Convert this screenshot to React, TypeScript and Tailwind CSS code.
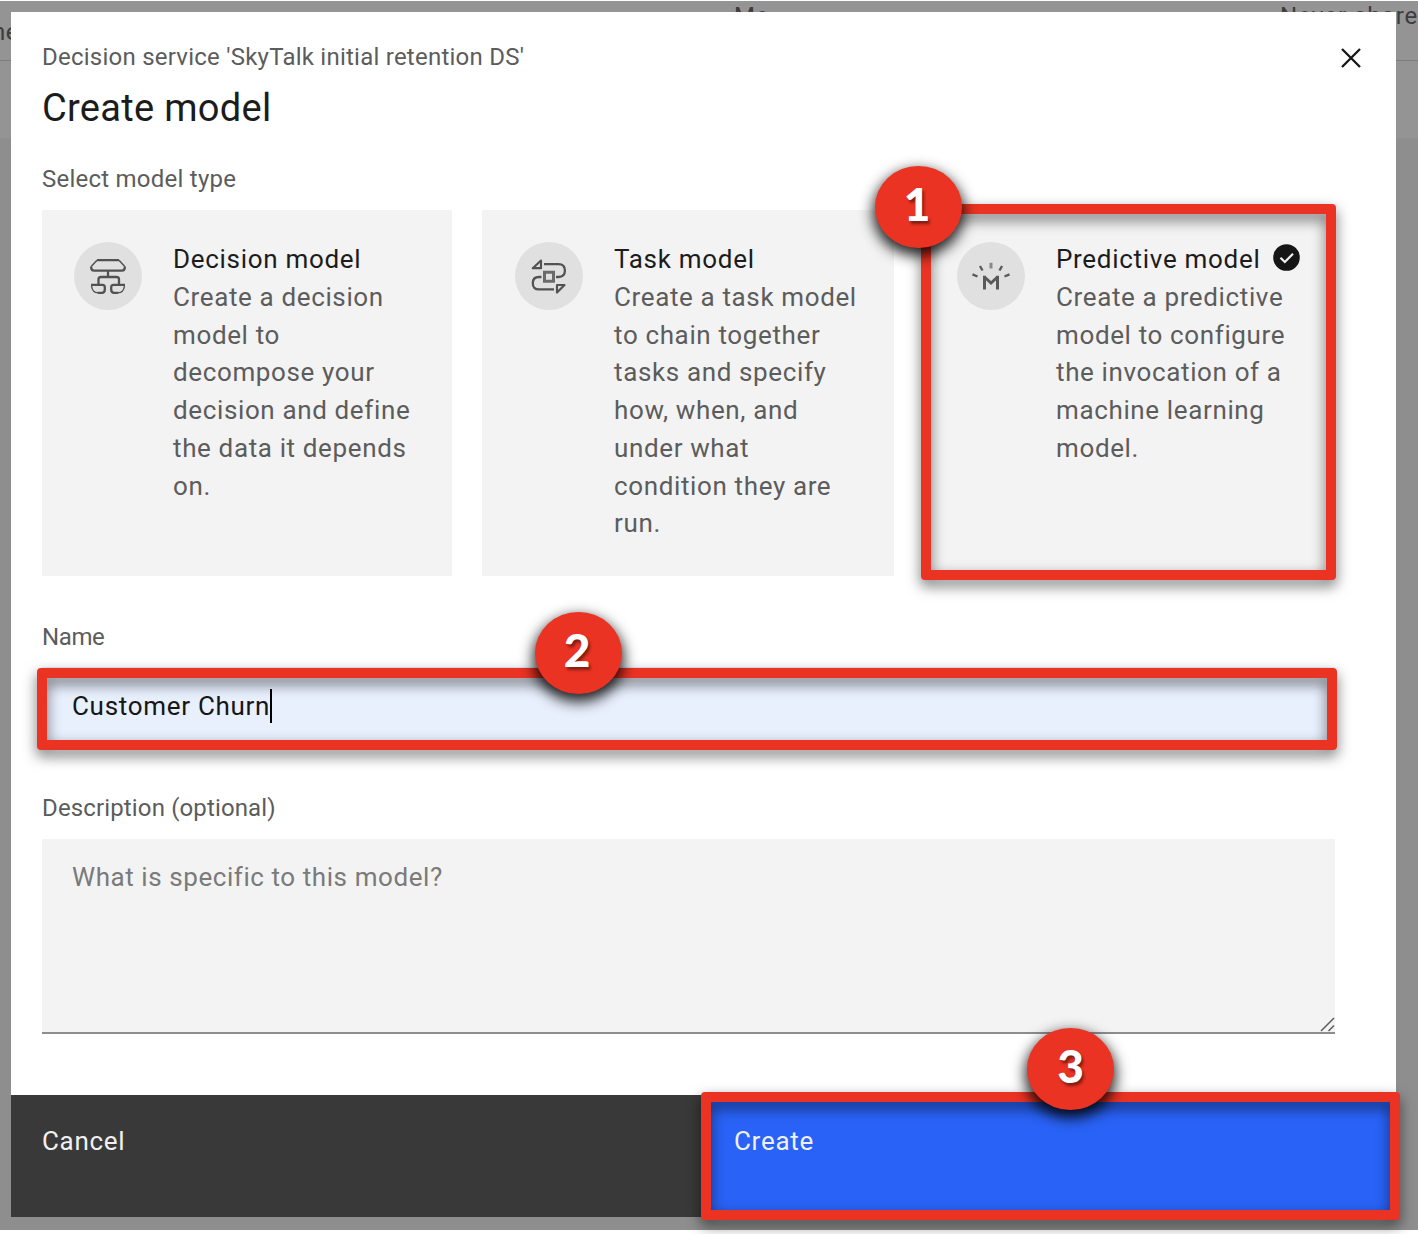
import type { ReactNode } from "react";

function Frame({ className }: { className: string }) {
  return (
    <div
      className={`pointer-events-none absolute rounded-[4px] border-[10px] border-[#eb3323] [filter:drop-shadow(0_6px_7px_rgba(0,0,0,0.55))] ${className}`}
    >
    </div>
  );
}

function Badge({ n, className }: { n: number; className: string }) {
  return (
    <div
      className={`absolute z-10 flex h-[82px] w-[87px] items-center justify-center rounded-[50%] bg-[#eb3323] pb-[7px] font-[Lato,sans-serif] text-[46px] font-black leading-none text-white shadow-[0_6px_14px_2px_rgba(0,0,0,0.85)] [text-shadow:2px_3px_3px_rgba(0,0,0,0.45)] ${className}`}
    >
      {n}
    </div>
  );
}

function DecisionIcon() {
  return (
    <svg width="36" height="36" viewBox="0 0 36 36" fill="none" stroke="#525252" strokeWidth="2.3">
      <path d="M7 2.2H29M1.2 8.4V9.5Q1.2 12.6 4.2 12.6H31.8Q34.8 12.6 34.8 9.5V8.4M18 13V19M8.5 26V21.5Q8.5 19 11 19H26.5Q29 19 29 21.5V26" />
      <path d="M7 2.2L1.2 8.4M29 2.2L34.8 8.4" strokeWidth="1.5" />
      <path d="M1 26.8H12.5Q14.8 26.8 14.8 29.3V31.5Q14.8 34.8 12 34.8H8M35 26.8H23.5Q21.2 26.8 21.2 29.3V31.5Q21.2 34.8 24 34.8H28" />
      <path d="M1.5 28Q2.5 34.8 8 34.8M34.5 28Q33.5 34.8 28 34.8" strokeWidth="1.4" />
    </svg>
  );
}

function TaskIcon() {
  return (
    <svg width="36" height="36" viewBox="0 0 36 36" fill="none" stroke="#525252" strokeWidth="2.3">
      <path d="M13 6.2H27.5Q33.9 6.2 33.9 12.6T27.5 19H25M10.500 19H8Q1.800 19 1.800 25.200T8 31.400H23" />
      <path d="M13.500 14.200H22.500V23.200H13.500Z" strokeWidth="3" stroke="#6a6a6a" />
      <path d="M1.800 10.200H10V2.500Z M26 27H33.500L26 34.500Z" strokeWidth="2.200" strokeLinejoin="round" />
    </svg>
  );
}

function PredictiveIcon() {
  return (
    <svg width="40" height="30" viewBox="0 0 40 30" fill="none" stroke="#5a5a5a" strokeWidth="2.4">
      <path d="M13.500 28.500V14.800M26.500 28.500V14.800" strokeWidth="3" />
      <path d="M13.500 16L20 22L26.500 16" strokeWidth="3" />
      <path d="M20 1.800V7.500" stroke="#888" strokeWidth="3" />
      <path d="M9 5L11.500 9.500M31 5L28.500 9.500M1.500 13.300L6.500 15.500M38.500 13.300L33.500 15.500" />
    </svg>
  );
}

function Card({
  icon,
  title,
  lines,
  selected,
  className,
}: {
  icon: ReactNode;
  title: string;
  lines: string[];
  selected?: boolean;
  className: string;
}) {
  return (
    <div className={`flex h-[366px] shrink-0 bg-[#f3f3f3] pt-8 ${className}`}>
      <div className="flex size-[68px] shrink-0 items-center justify-center rounded-full bg-[#e0e0e0]">{icon}</div>
      <div className="-mt-[1px] ml-[31px] whitespace-nowrap text-[26px] leading-[37.75px] tracking-[0.63px] text-[#5c5c5c]">
        <div className="flex items-center tracking-[0.7px] text-[#1c1c1c]">
          <span>{title}</span>
          {selected && (
            <svg className="-mt-1 ml-[13px]" width="27" height="27" viewBox="0 0 27 27" fill="none">
              <circle cx="13.5" cy="13.5" r="13.3" fill="#161616" />
              <path d="M7.500 13.800L11.800 18L20 9.800" stroke="#f3f3f3" strokeWidth="2.2" />
            </svg>
          )}
        </div>
        {lines.map((l) => (
          <div key={l}>{l}</div>
        ))}
      </div>
    </div>
  );
}

export default function App() {
  return (
    <div className="relative h-[1234px] w-[1418px] overflow-hidden bg-white font-[Roboto,sans-serif] text-[#5c5c5c]">
      <div className="absolute inset-x-0 top-px h-[1229px] bg-[#8e8e8e]">
        <div className="h-[137px] bg-[#949494] text-[24px] leading-7 tracking-[0.6px] text-[#3c3c3c]">
          <div className="relative h-[60px] border-b border-[#7c7c7c]">
            <span className="absolute -left-[8px] top-[17px]">ne</span>
            <span className="absolute left-[734px] top-px">Me</span>
            <span className="absolute left-[1280px] top-px whitespace-nowrap tracking-[1px]">Never share</span>
          </div>
        </div>
      </div>

      <div className="relative ml-[11px] mt-3 flex h-[1205px] w-[1385px] flex-col bg-white">
        <header className="relative h-[198px] pl-[31px] pt-[30px]">
          <p className="text-[24px] leading-[30px] tracking-[0.24px]">Decision service 'SkyTalk initial retention DS'</p>
          <h1 className="mt-[12px] text-[38px] leading-[48px] tracking-[0.3px] text-[#1c1c1c]">Create model</h1>
          <p className="mt-[32px] text-[24px] leading-[30px] tracking-[0.24px]">Select model type</p>
          <svg className="absolute left-[1330px] top-[36px]" width="20" height="20" viewBox="0 0 20 20" stroke="#161616" strokeWidth="2.3">
            <path d="M1 1L19 19M19 1L1 19" />
          </svg>
        </header>

        <div className="relative flex gap-[30px] pl-[31px]">
          <Card
            className="w-[410px] pl-8"
            icon={<DecisionIcon />}
            title="Decision model"
            lines={["Create a decision", "model to", "decompose your", "decision and define", "the data it depends", "on."]}
          />
          <Card
            className="w-[412px] pl-[33px]"
            icon={<TaskIcon />}
            title="Task model"
            lines={["Create a task model", "to chain together", "tasks and specify", "how, when, and", "under what", "condition they are", "run."]}
          />
          <Card
            className="w-[411px] pl-[33px]"
            icon={<PredictiveIcon />}
            title="Predictive model"
            selected
            lines={["Create a predictive", "model to configure", "the invocation of a", "machine learning", "model."]}
          />
          <Frame className="-top-[6px] left-[910px] h-[376px] w-[415px]" />
          <Badge n={1} className="-top-[44px] left-[864px] pr-[3px]" />
        </div>

        <label className="ml-[31px] mt-[46px] h-[30px] text-[24px] leading-[30px] tracking-[-0.4px]">Name</label>
        <div className="relative ml-[31px] mt-[15px] flex h-[76px] w-[1293px] items-center bg-[#e8effd] pl-[30px] pt-px">
          <Frame className="-left-[5px] top-[1px] h-[82px] w-[1300px]" />
          <span className="relative text-[26px] leading-[34px] tracking-[0.7px] text-[#161616]">Customer Churn</span>
          <span className="relative h-[34px] w-[2px] bg-black" />
          <Badge n={2} className="-top-[55px] left-[493px] pr-[3px]" />
        </div>

        <label className="ml-[31px] mt-[50px] h-[30px] text-[24px] leading-[30px] tracking-[0.14px]">Description (optional)</label>
        <div className="relative ml-[31px] mt-[16px] h-[195px] w-[1293px] border-b-2 border-[#8d8d8d] bg-[#f3f3f3] pl-[30px] pt-[21px] text-[26px] leading-[34px] tracking-[0.57px] text-[#7a7a7a]">
          What is specific to this model?
          <svg className="absolute bottom-0 right-0" width="15" height="15" viewBox="0 0 15 15" stroke="#5c5c5c" strokeWidth="1.5">
            <path d="M1 14L14 1M8.500 14L14 8.500" />
          </svg>
        </div>

        <footer className="relative mt-auto flex h-[122px] text-[26px] leading-[34px] tracking-[0.7px] text-[#f0f0f0]">
          <div className="w-[692px] bg-[#393939] pl-[31px] pt-[29px]">Cancel</div>
          <div className="flex-1 bg-[#2962f6] pl-[31px] pt-[29px]">Create</div>
          <Frame className="-top-[3px] left-[690px] h-[128px] w-[699px]" />
          <Badge n={3} className="-top-[67px] left-[1016px] pl-px" />
        </footer>
      </div>
    </div>
  );
}
